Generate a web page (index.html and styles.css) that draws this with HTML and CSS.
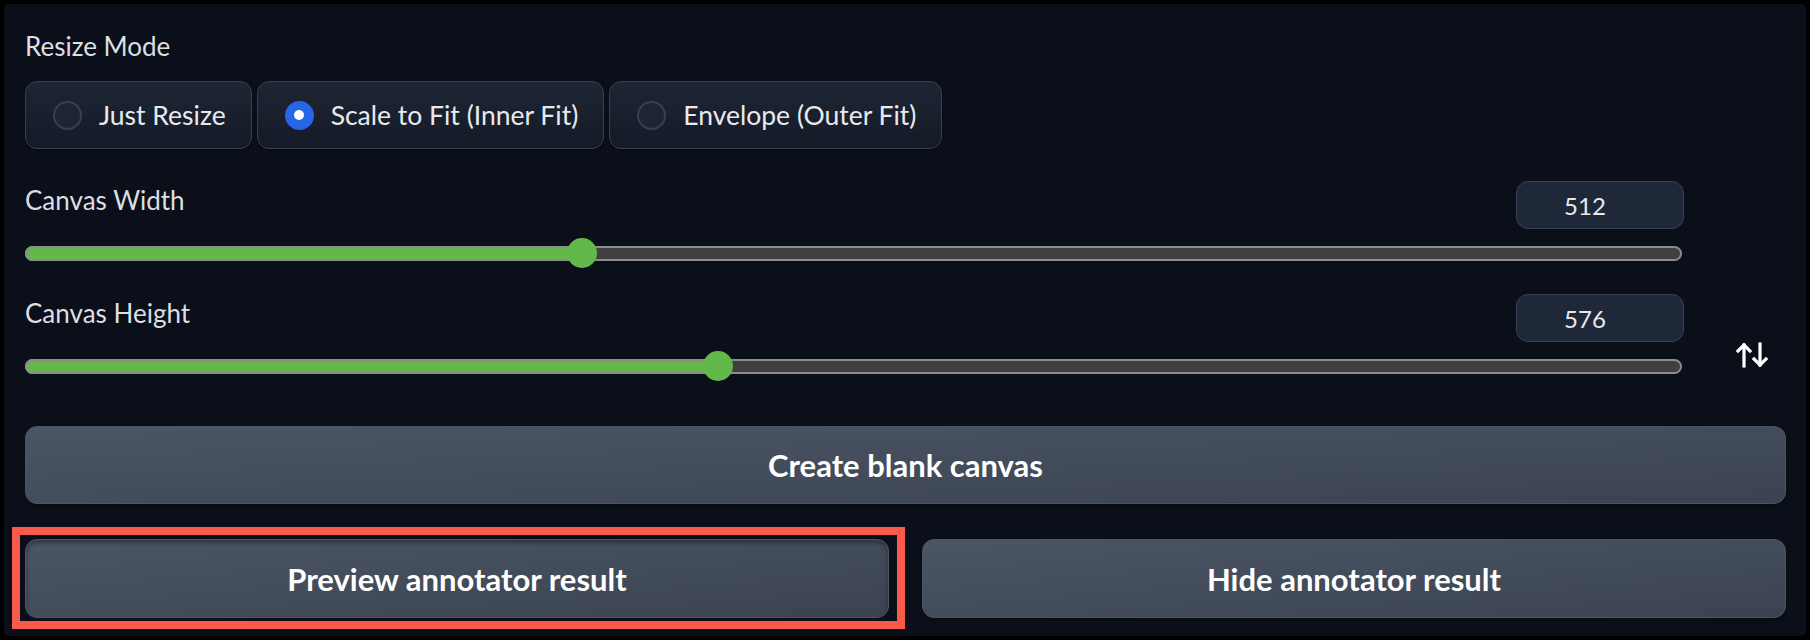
FILE: index.html
```html
<!DOCTYPE html>
<html lang="en">
<head>
<meta charset="utf-8">
<title>Resize settings</title>
<link rel="stylesheet" href="styles.css">
</head>
<body>
<div class="panel">
  <div class="field">
    <div class="field-label">Resize Mode</div>
    <div class="radio-row">
      <label class="pill"><span class="radio"></span><span class="pill-text">Just Resize</span></label>
      <label class="pill"><span class="radio checked"></span><span class="pill-text">Scale to Fit (Inner Fit)</span></label>
      <label class="pill"><span class="radio"></span><span class="pill-text">Envelope (Outer Fit)</span></label>
    </div>
  </div>

  <div class="dims">
    <div class="sliders">
      <div class="slider-block">
        <div class="slider-head">
          <span class="field-label head-label">Canvas Width</span>
          <span class="num">512</span>
        </div>
        <div class="track-wrap">
          <div class="track">
            <div class="fill" style="width:33.6%"></div>
            <div class="thumb" style="left:33.6%"></div>
          </div>
        </div>
      </div>
      <div class="slider-block">
        <div class="slider-head">
          <span class="field-label head-label">Canvas Height</span>
          <span class="num">576</span>
        </div>
        <div class="track-wrap">
          <div class="track">
            <div class="fill" style="width:41.8%"></div>
            <div class="thumb" style="left:41.8%"></div>
          </div>
        </div>
      </div>
    </div>
    <div class="swap">
      <svg width="34" height="28" viewBox="0 0 34 28" fill="none" stroke="#ffffff" stroke-width="3.2" stroke-linecap="square" stroke-linejoin="miter">
        <path d="M9 25 V4"/>
        <path d="M3 10 L9 4 L15 10"/>
        <path d="M25 3 V24"/>
        <path d="M19 18 L25 24 L31 18"/>
      </svg>
    </div>
  </div>

  <button class="btn btn-wide">Create blank canvas</button>

  <div class="btn-row">
    <div class="highlight">
      <button class="btn pressed">Preview annotator result</button>
    </div>
    <button class="btn">Hide annotator result</button>
  </div>
</div>
</body>
</html>
```

FILE: styles.css
```css
* { box-sizing: border-box; }

html, body {
  margin: 0;
  padding: 0;
  background: #000000;
}

body {
  width: 1810px;
  height: 640px;
  padding: 4px;
  font-family: "Lato", "Noto Sans", sans-serif;
  color: #e5e7eb;
}

.panel {
  height: 632px;
  background: #0b0f19;
  border-radius: 5px;
  padding: 26px 20px 0 21px;
  display: flex;
  flex-direction: column;
}

.field-label {
  font-size: 26px;
  line-height: 32px;
  color: #dcdfe4;
}

.radio-row {
  display: flex;
  gap: 5px;
  margin-top: 19px;
}

.pill {
  height: 68px;
  display: flex;
  align-items: center;
  padding: 0 25px 0 27px;
  border: 1px solid #374151;
  border-radius: 12px;
  background: linear-gradient(to top, #141a27, #1e2534);
  box-shadow: 0 1px 2px rgba(0,0,0,0.4);
}

.radio {
  width: 29px;
  height: 29px;
  border-radius: 50%;
  border: 2px solid #374151;
  background: #1d2432;
  margin-right: 17px;
  flex: none;
}

.radio.checked {
  background: #2766e6;
  border-color: #2766e6;
  position: relative;
}

.radio.checked::after {
  content: "";
  position: absolute;
  left: 50%;
  top: 50%;
  width: 10px;
  height: 10px;
  margin: -5px 0 0 -5px;
  border-radius: 50%;
  background: #ffffff;
}

.pill-text {
  font-size: 26.5px;
  color: #e8eaee;
  white-space: nowrap;
}

.dims {
  display: flex;
  margin-top: 32px;
}

.sliders {
  width: 1659px;
  display: flex;
  flex-direction: column;
  gap: 26px;
}

.slider-head {
  height: 48px;
  display: flex;
  align-items: flex-start;
  justify-content: space-between;
}

.head-label {
  margin-top: 3px;
}

.num {
  width: 168px;
  height: 48px;
  border: 1px solid #374151;
  border-radius: 12px;
  background: #1f2838;
  display: flex;
  align-items: center;
  justify-content: center;
  padding-right: 30px;
  font-size: 24px;
  color: #e8eaee;
}

.track-wrap {
  height: 30px;
  margin-top: 9px;
  display: flex;
  align-items: center;
  padding-right: 2px;
}

.track {
  position: relative;
  width: 100%;
  height: 15px;
  border: 2px solid #8c8c8c;
  border-radius: 8px;
  background: #404040;
}

.fill {
  position: absolute;
  left: -2px;
  top: -2px;
  bottom: -2px;
  background: #63b84a;
  border-radius: 8px 0 0 8px;
  border: 2px solid #8c8c8c;
  border-right: none;
}

.thumb {
  position: absolute;
  top: 50%;
  width: 30px;
  height: 30px;
  margin: -15px 0 0 -15px;
  border-radius: 50%;
  background: #63b84a;
}

.swap {
  flex: 1;
  display: flex;
  align-items: flex-end;
  justify-content: center;
  padding: 0 0 12px 34px;
}

.btn {
  font-family: "Lato", "Noto Sans", sans-serif;
  font-weight: 700;
  font-size: 31px;
  color: #ffffff;
  border: 1px solid #4b5563;
  border-radius: 12px;
  background: linear-gradient(to bottom right, #4b5563, #3b4352);
  box-shadow: 0 1px 3px rgba(0,0,0,0.3);
  height: 79px;
  width: 100%;
  padding: 0;
}

.btn-wide {
  margin-top: 45px;
  height: 78px;
}

.btn-row {
  display: grid;
  grid-template-columns: 1fr 1fr;
  gap: 33px;
  margin-top: 35px;
}

.highlight {
  position: relative;
}

.highlight::after {
  content: "";
  position: absolute;
  left: -13px;
  right: -16px;
  top: -12px;
  bottom: -11px;
  border: 8px solid #fa5a4b;
  pointer-events: none;
}

.btn.pressed {
  box-shadow: inset 0 3px 4px rgba(0,0,0,0.35);
}
```
